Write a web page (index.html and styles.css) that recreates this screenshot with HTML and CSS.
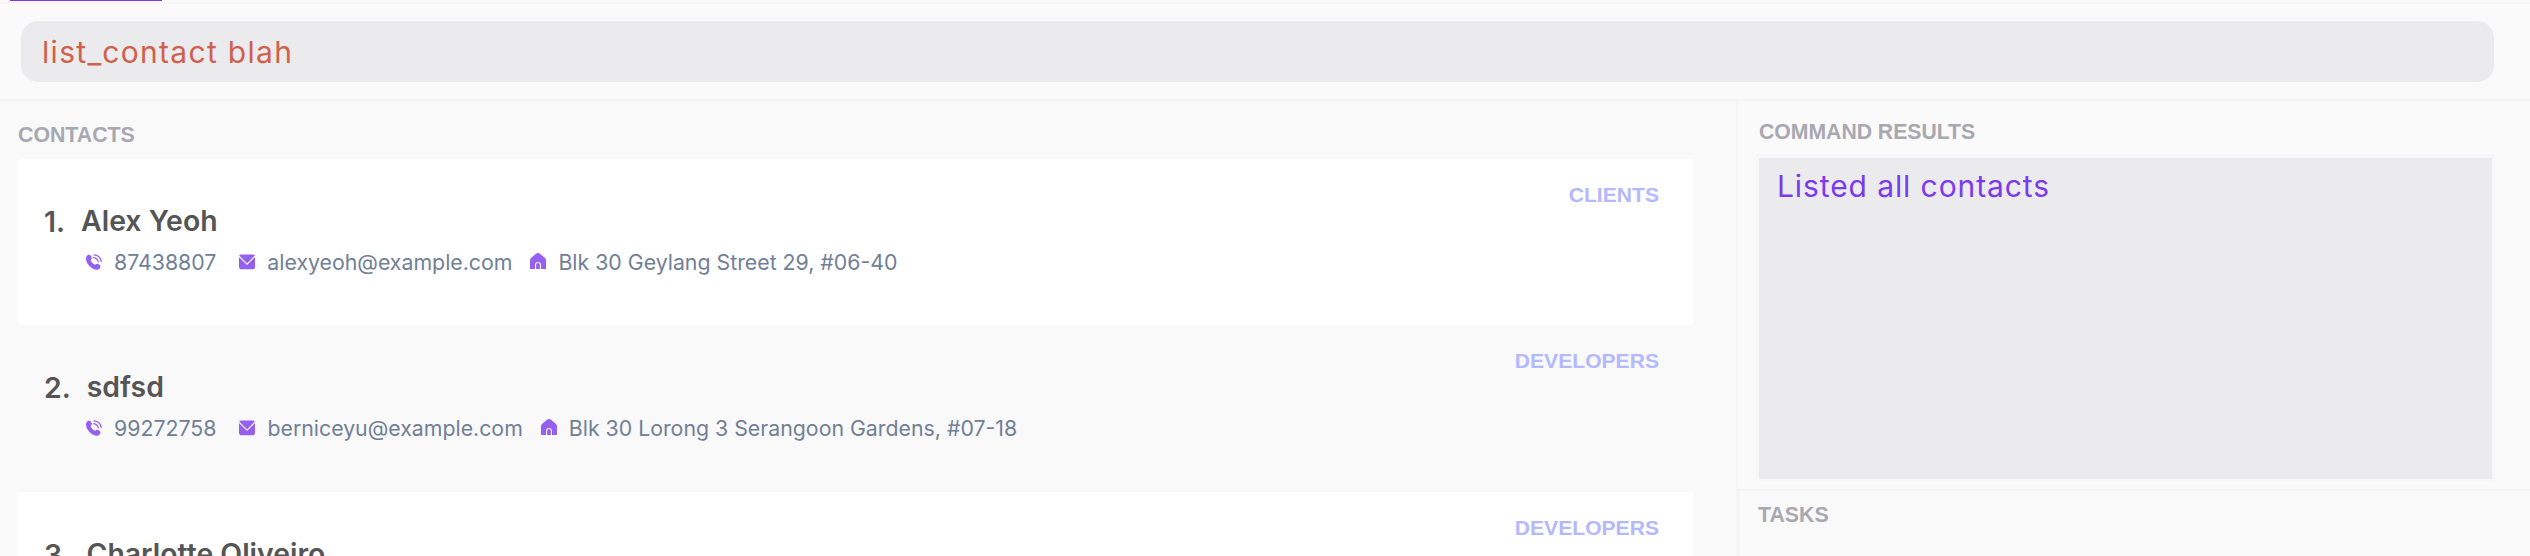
FILE: index.html
```html
<!DOCTYPE html>
<html lang="en">
<head>
<meta charset="utf-8">
<title>Contacts</title>
<link rel="stylesheet" href="styles.css">
</head>
<body>
<svg class="defs" aria-hidden="true">
  <symbol id="phone" viewBox="0 0 16 16">
    <path d="M1.6 1.2C3.2.2 4.6.9 5.4 2.6c.8 1.6.3 2.5-.6 3.4-.4.9 3.200 5 4.700 4.600 1.200-1.200 2.400-.9 3.900.1 1.500 1 1.400 2.500.2 3.700-1.400 1.500-3.700 1.800-6.300.4C4.100 13.100.9 9.700.2 6.200-.2 4 .1 2.300 1.600 1.200z" fill="currentColor"/>
    <path d="M8 .8c4 .3 6.700 2.900 7.200 6.700M7.600 3.600c2.600.3 4.200 1.800 4.600 4.200" fill="none" stroke="currentColor" stroke-width="1.200" stroke-linecap="round"/>
  </symbol>
  <symbol id="mail" viewBox="0 0 16 16">
    <path d="M2.300.5h11.400c1 0 1.700.4 2.100 1.100L8 9.600.2 1.600C.6.900 1.300.5 2.300.5z" fill="currentColor"/>
    <path d="M0 2.900l8 8 8-8v9.800c0 1.700-.9 2.600-2.600 2.600H2.600C.9 15.300 0 14.400 0 12.700z" fill="currentColor"/>
  </symbol>
  <symbol id="home" viewBox="0 0 16 16">
    <path fill-rule="evenodd" d="M6 .8c1.300-1 2.700-1 4 0l4.700 4C15.600 5.600 16 6.300 16 7.500V16h-5v-3.600C11 10.200 9.900 9.100 8 9.100s-3 1.100-3 3.300V16H0V7.500c0-1.200.4-1.900 1.300-2.700z" fill="currentColor"/>
    <path d="M6.100 16v-3.500c0-1.600.6-2.400 1.900-2.400s1.900.8 1.900 2.400V16z" fill="currentColor"/>
  </symbol>
</svg>
<header class="tabs"><span class="tab-active"></span></header>
<div class="command"><div class="command-input"><span class="command-text">list_contact blah</span></div></div>
<main class="main">
  <section class="contacts">
    <h2 class="heading heading-contacts"><span>CONTACTS</span></h2>
    <div class="list">
      <article class="card">
        <div class="title"><span class="index">1.</span><span class="name">Alex Yeoh</span></div>
        <div class="details">
          <svg class="icon"><use href="#phone"/></svg><span class="phone">87438807</span>
          <svg class="icon"><use href="#mail"/></svg><span class="email">alexyeoh@example.com</span>
          <svg class="icon home"><use href="#home"/></svg><span class="address">Blk 30 Geylang Street 29, #06-40</span>
        </div>
        <span class="tag">CLIENTS</span>
      </article>
      <article class="card alt">
        <div class="title"><span class="index">2.</span><span class="name">sdfsd</span></div>
        <div class="details">
          <svg class="icon"><use href="#phone"/></svg><span class="phone">99272758</span>
          <svg class="icon"><use href="#mail"/></svg><span class="email">berniceyu@example.com</span>
          <svg class="icon home"><use href="#home"/></svg><span class="address">Blk 30 Lorong 3 Serangoon Gardens, #07-18</span>
        </div>
        <span class="tag">DEVELOPERS</span>
      </article>
      <article class="card">
        <div class="title"><span class="index">3.</span><span class="name">Charlotte Oliveiro</span></div>
        <span class="tag">DEVELOPERS</span>
      </article>
    </div>
  </section>
  <aside class="side">
    <section class="results">
      <h2 class="heading heading-results">COMMAND RESULTS</h2>
      <div class="result-box"><span class="result-text">Listed all contacts</span></div>
    </section>
    <section class="tasks"><h2 class="heading heading-tasks">TASKS</h2></section>
  </aside>
</main>
</body>
</html>
```
FILE: styles.css
```css
* { box-sizing: border-box; }
body { margin: 0; width: 2530px; height: 556px; overflow: hidden; display: flex; flex-direction: column; background: #fafafa; font-family: Inter, sans-serif; }
.defs { display: none; }
.tabs { height: 4px; flex: none; padding-left: 10px; border-bottom: 2px solid #f5f5f6; }
.tab-active { display: block; width: 152px; height: 1px; background: #7c3aed; }
.command { flex: none; height: 97px; padding: 17px 36px 0 21px; border-bottom: 2px solid #f5f5f6; }
.command-input { height: 61px; border-radius: 17px; background: #ebebed; padding-left: 21px; display: flex; align-items: center; }
.command-text { font-size: 30px; line-height: 60px; font-weight: 400; color: #d0604c; letter-spacing: 1.3px; white-space: pre; }
.main { flex: 1; min-height: 0; display: flex; }
.contacts { width: 1736px; flex: none; overflow: hidden; padding: 19px 43px 0 18px; border-top: 1px solid #f5f5f6; }
.heading { margin: 0; font: bold 21.3px/29px "Liberation Sans", Arial, sans-serif; color: #a8a8b1; white-space: nowrap; }
.heading-contacts { width: 419px; height: 29px; margin-bottom: 9px; background: #f9f9f9; }
.card { position: relative; height: 166.4px; background: #fff; padding: 44px 0 0 26px; }
.card.alt { background: #f9f9f9; }
.title { display: flex; height: 36px; gap: 16px; font-size: 28.4px; line-height: 36px; font-weight: 600; color: #555; white-space: nowrap; }
.index { position: relative; top: 1px; }
.details { display: flex; align-items: center; height: 28px; margin: 9px 0 0 42px; font-size: 21.3px; line-height: 28px; color: #718096; white-space: nowrap; }
.icon { width: 16px; height: 16px; flex: none; color: #955ff0; }
.home { margin-top: -2px; }
.phone { margin: 0 23px 0 12px; }
.email { margin: 0 18px 0 12px; }
.address { margin: -1px 0 0 12px; }
.tag { position: absolute; right: 34px; top: 23px; font: bold 21.1px/26px "Liberation Sans", Arial, sans-serif; color: #b4b8fd; }
.side { flex: 1; display: flex; flex-direction: column; }
.results { height: 390px; border-left: 2px solid #f5f6f8; border-bottom: 2px solid #f5f5f6; padding: 16px 35px 0 18px; }
.heading-results { padding-left: 3px; font-size: 21.2px; }
.result-box { margin-top: 8px; height: 327px; border: solid #f7f7f9; border-width: 4px 3px 2px; background: #ebebed; padding: 10px 0 0 18px; }
.result-text { display: block; font-size: 30px; line-height: 36px; font-weight: 400; color: #7c3aed; letter-spacing: 0.9px; white-space: nowrap; }
.tasks { flex: 1; border-left: 4px solid #f5f6f8; padding: 10px 35px 0 17px; }
.heading-tasks { background: #f9f9f9; padding-left: 1px; }
```
